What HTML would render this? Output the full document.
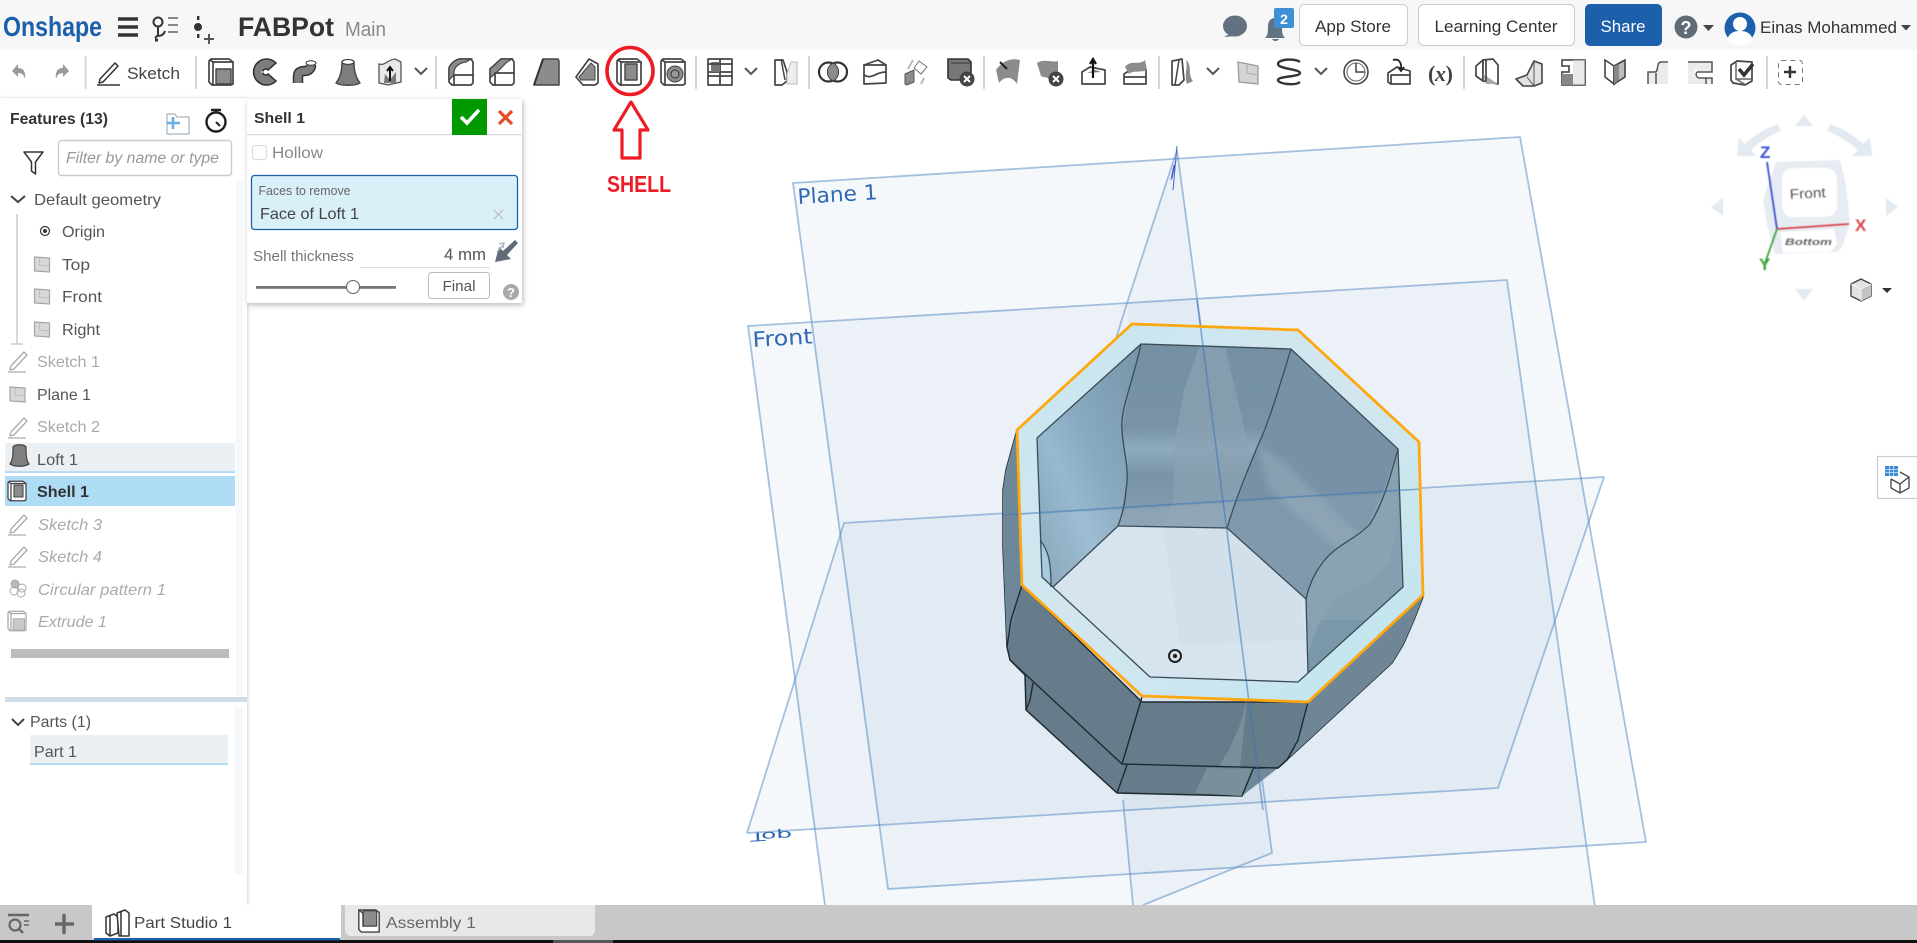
<!DOCTYPE html>
<html><head><meta charset="utf-8"><title>FABPot</title>
<style>
html,body{margin:0;padding:0;background:#fff;overflow:hidden}
svg{display:block;font-family:"Liberation Sans",sans-serif}
.i{fill:#fff;stroke:#444;stroke-width:1.7;stroke-linejoin:round;stroke-linecap:round}
.g{fill:#8c8c8c;stroke:#444;stroke-width:1.4;stroke-linejoin:round}
.n{fill:none;stroke:#444;stroke-width:1.7;stroke-linejoin:round;stroke-linecap:round}
.sep{fill:#d6d6d6}
.t{fill:#555;font-size:16px}
.d{fill:#aaa;font-size:16px}
.di{fill:#aaa;font-size:16px;font-style:italic}
</style></head>
<body>
<svg xmlns="http://www.w3.org/2000/svg" width="1917" height="943" viewBox="0 0 1917 943">
<defs>
<linearGradient id="wa" x1="0" y1="1" x2="1" y2="0"><stop offset="0" stop-color="#7f9db1"/><stop offset=".35" stop-color="#97b9d0"/><stop offset=".55" stop-color="#88a9bf"/><stop offset="1" stop-color="#7794a8"/></linearGradient>
<linearGradient id="wb" x1="0" y1="0" x2="0" y2="1"><stop offset="0" stop-color="#7590a3"/><stop offset=".45" stop-color="#7893a7"/><stop offset=".57" stop-color="#8fabc0"/><stop offset=".72" stop-color="#7893a6"/><stop offset="1" stop-color="#88a0b1"/></linearGradient>
<linearGradient id="rg" x1="0" y1="0" x2="1" y2="1"><stop offset="0" stop-color="#c8e6ef"/><stop offset=".5" stop-color="#d3e6ef"/><stop offset="1" stop-color="#bfe5ef"/></linearGradient>
<filter id="sh" x="-10%" y="-10%" width="125%" height="125%"><feDropShadow dx="1" dy="2" stdDeviation="3" flood-color="#000" flood-opacity=".28"/></filter>
<filter id="sh2" x="-5%" y="-2%" width="115%" height="104%"><feDropShadow dx="1" dy="0" stdDeviation="1.800" flood-color="#000" flood-opacity=".18"/></filter>
<filter id="bl" color-interpolation-filters="sRGB"><feGaussianBlur stdDeviation=".45"/></filter>
<filter id="soft" x="-20%" y="-20%" width="140%" height="140%" color-interpolation-filters="sRGB"><feGaussianBlur stdDeviation="3.500"/></filter>
<clipPath id="cw"><path d="M1141 344 1291 349 1398 449 1403 587 1308 673 1306 599 1227 528 1118 526 1053 587 1042 577 1037 438Z"/></clipPath>
<g id="box"><path class="i" d="M-10-13H8l4 3V12l-2 1H-9l-3-3V-11z"/><path class="n" d="M-8-10H12M-8-10V13M-11-12l3 2"/></g>
<g id="pl"><path d="M-8-7 7-6V8L-8 7z" fill="#d8d8d8" stroke="#a5a5a5" stroke-width="1.200"/><path d="M-3-7V1L7 2" fill="none" stroke="#b5b5b5" stroke-width=".8"/></g>
<g id="pen"><path d="M-7 6 6-8 9-5-4 9l-4 1zM-10 12H8" fill="none" stroke="#aaa" stroke-width="1.300" stroke-linejoin="round"/></g>
</defs>

<rect width="1917" height="943" fill="#fff"/>

<!-- VIEWPORT PLANES -->
<g stroke="#5f8fc4" stroke-opacity=".55" stroke-width="1.800" fill="#3c6eaa" fill-opacity=".05" stroke-linejoin="round">
<path d="M793 183 1520 137 1646 842 888 889Z"/>
<path d="M748 326 1507 280 1600 943H830Z"/>
<path d="M844 523 1604 477 1498 788 747 833Z"/>
<path d="M1177 150 1272 853 1143 905 1133 905 1123 800 1128 300Z" stroke="none"/>
<path d="M1100 390 1128 300 1177 150 1272 853 1143 905" fill="none"/>
<path d="M1123 800 1133 905" fill="none"/>
</g>
<g fill="#2f68b3" font-family="'DejaVu Sans','Liberation Sans',sans-serif" font-size="21">
<text transform="translate(798,204) rotate(-3.500)" textLength="80" lengthAdjust="spacingAndGlyphs">Plane 1</text>
<text transform="translate(753,347) rotate(-3.500)" textLength="60" lengthAdjust="spacingAndGlyphs">Front</text>
<text transform="translate(750,833) rotate(-3) scale(1,-.6)" font-size="20" textLength="42" lengthAdjust="spacingAndGlyphs">Top</text>
</g>
<g stroke="#3f63c4" stroke-width="1" fill="none"><path d="M1177 146 1173 190M1176 160 1172 178M1174 165 1171 180"/></g>

<!-- PART outer -->
<path d="M1017 430 1006 470 1003 490 1003 547 1007 647 1010 660 1025 675 1026 710 1117 793 1242 796 1253 769 1278 768 1392 663 1403 645 1414 620 1423 597 1308 702H1142L1022 585Z" fill="#667c8a" stroke="#1d2a33" stroke-width="1.500" stroke-linejoin="round"/>
<path d="M1017 430 1006 470 1003 490 1003 547 1007 647 1022 585Z" fill="#6f8899"/>
<path d="M1308 702 1423 597 1414 620 1403 645 1392 663 1278 768 1287 760 1300 730Z" fill="#6e8696"/>
<path d="M1247 699 1240 725 1229 750 1218 767 1250 769 1240 768Z" fill="#788f9c"/>
<path d="M1207 768 1195 793 1242 796 1253 769Z" fill="#788f9c"/>
<path d="M1253 769 1242 796 1278 768Z" fill="#708898"/>
<g fill="none" stroke="#1d2a33" stroke-width="1.400" stroke-linejoin="round">
<path d="M1022 585 1011 620 1007 647"/>
<path d="M1142 697 1122 764"/>
<path d="M1010 660 1122 764 1278 768"/>
<path d="M1308 702 1298 740 1287 760 1278 768"/>
<path d="M1127 765 1117 793"/>
<path d="M1253 769 1242 796"/>
<path d="M1033 683 1030 700 1026 710"/>
</g>

<!-- ring top -->
<path d="M1132 324 1298 330 1419 442 1423 595 1308 702 1142 696 1022 585 1017 430Z" fill="url(#rg)"/>
<!-- floor -->
<path d="M1118 526 1227 528 1306 599 1308 673 1298 682 1150 677 1053 587Z" fill="#d6e4ef"/>
<path d="M1163 527 1227 528 1300 594 1306 640 1180 645Z" fill="#cfdfe9" opacity=".8"/>
<!-- walls -->
<path d="M1037 438 1141 344 1130 385 1122 430 1127 477 1118 526 1053 587 1042 577Z" fill="url(#wa)"/>
<path d="M1141 344 1291 349 1275 400 1260 440 1237 500 1227 528 1118 526 1127 477 1122 430 1130 385Z" fill="url(#wb)"/>
<path d="M1291 349 1398 449 1383 493 1367 527 1347 540 1320 563 1306 599 1227 528 1237 500 1260 440 1275 400Z" fill="#7792a6"/>
<path d="M1398 449 1403 587 1308 673 1306 599 1320 563 1347 540 1367 527 1383 493Z" fill="#7b98ab"/>
<g clip-path="url(#cw)">
<path d="M1199 347 1184 390 1175 440 1173 500 1163 527 1227 528 1237 500 1252 460 1225 347Z" fill="#8aa3b3" opacity=".7"/>
<path d="M1000 517 1425 491 1425 620 1000 620Z" fill="#fff" opacity=".07"/>
<path d="M1256 444 1282 460 1360 535 1340 552 1270 490Z" fill="#98b0bf" opacity=".5" filter="url(#soft)"/>
<path d="M1398 520 1390 560 1370 582 1335 600 1318 625 1306 660 1306 599 1320 563 1347 540 1367 527 1383 493 1398 449Z" fill="#8aa3b3" opacity=".9"/>
</g>
<path d="M1040 540 1048 552 1051 570 1051 587 1042 577Z" fill="#a6cbe0"/>
<g fill="none" stroke="#3c4c58" stroke-width="1.300" stroke-linejoin="round">
<path d="M1141 344 1291 349 1398 449 1403 587 1308 673 1298 682 1150 677 1042 577 1037 438Z"/>
<path d="M1118 526 1227 528 1306 599 1308 673"/>
<path d="M1118 526 1053 587"/>
<path d="M1141 344C1132 385 1120 410 1122 430 1123 450 1130 470 1126 490 1125 505 1122 515 1118 526"/>
<path d="M1291 349C1280 385 1268 425 1258 445 1248 470 1237 495 1227 528"/>
<path d="M1398 449C1392 470 1385 500 1370 524 1360 535 1345 542 1335 550 1320 562 1310 580 1306 599"/>
<path d="M1040 540C1048 550 1051 560 1051 587"/>
</g>
<!-- plane lines over part -->
<g stroke="#3c74b8" stroke-opacity=".55" stroke-width="1.600" fill="none">
<path d="M1003 515 1421 489"/>
<path d="M1197 300 1263 810"/>
</g>
<!-- orange edge -->
<path d="M1132 324 1298 330 1419 442 1423 595 1308 702 1142 696 1022 585 1017 430Z" fill="none" stroke="#ffa70f" stroke-width="2.800" stroke-linejoin="round"/>
<!-- origin -->
<circle cx="1175" cy="656" r="6" fill="#dfe3e6" stroke="#222" stroke-width="2"/><circle cx="1175" cy="656" r="2.200" fill="#222"/>

<!-- HEADER -->
<rect width="1917" height="50" fill="#f7f7f7"/>
<text x="3" y="36" font-size="28" font-weight="700" fill="#1c5fab" textLength="99" lengthAdjust="spacingAndGlyphs">Onshape</text>
<path d="M118 19h20M118 27h20M118 35h20" stroke="#333" stroke-width="3.400" fill="none"/>
<g fill="none" stroke="#333" stroke-width="2"><circle cx="158" cy="22" r="4.500"/><path d="M158 27v8l-3 3M158 36c4 0 6-2 7-5"/><path d="M168 18h10M168 25h10M168 32h10" stroke="#888"/><path d="M155 40h3" stroke-width="3"/></g>
<g fill="#333"><circle cx="198" cy="27" r="4"/><rect x="197" y="16" width="2.400" height="4"/><rect x="197" y="34" width="2.400" height="4"/></g>
<path d="M209 34v10M204 39h10" stroke="#555" stroke-width="2"/>
<text x="238" y="36" font-size="27" font-weight="700" fill="#333" textLength="96" lengthAdjust="spacingAndGlyphs">FABPot</text>
<text x="345" y="36" font-size="20" fill="#888" textLength="41" lengthAdjust="spacingAndGlyphs">Main</text>

<ellipse cx="1235" cy="26" rx="12" ry="10.500" fill="#637280"/><path d="M1224 37l9-5 3 4z" fill="#637280"/>
<path d="M1265 38c3-3 3-6 3-12 0-5 3-8 7-8s7 3 7 8c0 6 0 9 3 12z" fill="#637280"/><path d="M1272 39a4 4 0 0 0 7 0z" fill="#637280"/>
<rect x="1274" y="8" width="20" height="20" rx="2" fill="#3f8fd6"/>
<text x="1284" y="24" font-size="14" font-weight="700" fill="#fff" text-anchor="middle">2</text>

<rect x="1299.500" y="4.500" width="108" height="41" rx="5" fill="#fff" stroke="#ccc"/>
<text x="1353" y="32" font-size="17" fill="#333" text-anchor="middle" textLength="76" lengthAdjust="spacingAndGlyphs">App Store</text>
<rect x="1418.500" y="4.500" width="156" height="41" rx="5" fill="#fff" stroke="#ccc"/>
<text x="1496" y="32" font-size="17" fill="#333" text-anchor="middle" textLength="123" lengthAdjust="spacingAndGlyphs">Learning Center</text>
<rect x="1585" y="4" width="77" height="42" rx="5" fill="#1c5fab"/>
<text x="1623" y="32" font-size="17" fill="#fff" text-anchor="middle" textLength="45" lengthAdjust="spacingAndGlyphs">Share</text>
<circle cx="1686" cy="27" r="11.500" fill="#5f6b76"/><text x="1686" y="34" font-size="18" font-weight="700" fill="#fff" text-anchor="middle">?</text>
<path d="M1703 25h11l-5.500 6z" fill="#444"/>
<circle cx="1740" cy="28" r="15.500" fill="#1c5fab"/>
<circle cx="1740" cy="24" r="7" fill="#fff"/><path d="M1727 40c2-7 7-9 13-9s11 2 13 9c-4 4-8 5-13 5s-9-1-13-5z" fill="#fff"/>
<text x="1760" y="33" font-size="17" fill="#333" textLength="137" lengthAdjust="spacingAndGlyphs">Einas Mohammed</text>
<path d="M1901 25h10l-5 5.500z" fill="#444"/>

<!-- TOOLBAR -->
<g class="sep">
<rect x="84.500" y="56" width="2" height="33"/><rect x="195" y="56" width="2" height="33"/><rect x="435" y="56" width="2" height="33"/><rect x="695" y="56" width="2" height="33"/><rect x="808" y="56" width="2" height="33"/><rect x="983" y="56" width="2" height="33"/><rect x="1158" y="56" width="2" height="33"/><rect x="1463" y="56" width="2" height="33"/><rect x="1766" y="56" width="2" height="33"/>
</g>
<g transform="translate(19,72)"><path d="M-7-1-1-8v4c5 0 8 3 7 11-1-4-3-6-7-6v4z" fill="#9a9a9a"/></g>
<g transform="translate(62,72)"><path d="M7-1 1-8v4c-5 0-8 3-7 11 1-4 3-6 7-6v4z" fill="#9a9a9a"/></g>
<g transform="translate(109,73)"><path d="M-9 6 6-10l3 3L-6 9l-4 1zM-12 12H11" fill="none" stroke="#333" stroke-width="1.500" stroke-linejoin="round"/></g>
<text x="127" y="79" font-size="17" fill="#444" textLength="53" lengthAdjust="spacingAndGlyphs">Sketch</text>

<g transform="translate(221,72)"><use href="#box"/><path class="g" d="M-5-3H10V12H-5z"/></g>
<g transform="translate(267,72)"><path d="M9-9A13 13 0 1 0 9 9L1 2a3 3 0 1 1 0-4z" fill="#7d7d7d" stroke="#333" stroke-width="1.600"/><path d="M-6 0h4M1 0h6" stroke="#fff" stroke-width="1"/></g>
<g transform="translate(306,72)"><path d="M-8 11V5c0-6 4-6 7-6s6-2 6-6V-7" fill="none" stroke="#333" stroke-width="10.500"/><path d="M-8 11V5c0-6 4-6 7-6s6-2 6-6V-7" fill="none" stroke="#7d7d7d" stroke-width="7.500"/><ellipse cx="5" cy="-9" rx="5" ry="2.200" fill="#fff" stroke="#333"/></g>
<g transform="translate(348,72)"><path d="M-6-10C-6-2-8 6-12 11c4 3 20 3 24 0C8 6 6-2 6-10z" fill="#7d7d7d" stroke="#444" stroke-width="1.400"/><ellipse cx="0" cy="-10" rx="6" ry="2.500" fill="#fff" stroke="#444" stroke-width="1.300"/></g>
<g transform="translate(390,72)"><path d="M-11-8c6 2 8-4 16-5l6 3V10L-2 13l-9-2z" fill="#e9e9e9" stroke="#555" stroke-width="1.300"/><path d="M-5 2 0 8 6 0V11H-6z" fill="#777"/><path d="M0 9V-4M-3-1 0-5 3-1" stroke="#111" stroke-width="2" fill="none"/></g>
<path d="M415 68l6 6 6-6" fill="none" stroke="#555" stroke-width="2"/>

<g transform="translate(461,72)"><path class="i" d="M-12-4C-10-9-5-13 0-13H10l2 3V11l-2 2H-9l-3-3z"/><path d="M-12-4V8L-7 3C-8-4-3-9 5-10L10-13H0C-5-13-10-9-12-4z" fill="#8c8c8c" stroke="#444" stroke-width="1.200"/><path class="n" d="M-7 3V13M-7 3H12"/></g>
<g transform="translate(502,72)"><path class="i" d="M-12-3-1-13H10l2 3V11l-2 2H-9l-3-3z"/><path d="M-12-3V6L-5 0 5-10 10-13H-1z" fill="#8c8c8c" stroke="#444" stroke-width="1.200"/><path class="n" d="M-7 1V13M-7 1H12"/></g>
<g transform="translate(547,72)"><path d="M-13 13-4-13H11l1 2V13z" fill="#8c8c8c" stroke="#444" stroke-width="1.500" stroke-linejoin="round"/><path d="M-4-13-13 13" stroke="#333" stroke-width="2"/></g>
<g transform="translate(587,72)"><path class="i" d="M-11 5 2-13 11-8V11L8 13H-4z"/><path d="M-8 5 4-9 8-5V8H-6z" fill="#8c8c8c" stroke="#444"/></g>
<g transform="translate(629,72)"><use href="#box"/><path class="g" d="M-4-8H8V8H-4z"/></g>
<g transform="translate(673,72)"><use href="#box"/><circle cx="2" cy="2" r="8" fill="#8c8c8c" stroke="#444"/><circle cx="2" cy="2" r="4" fill="#999" stroke="#333"/></g>

<g transform="translate(720,72)"><path class="i" d="M-12-13H12V13H-12z"/><path d="M0-13V13M-12 0H12" stroke="#444" stroke-width="1.800"/><rect x="-9" y="-10" width="9" height="10" fill="#777"/><path class="n" d="M-12-8H12M-12 4H12"/></g>
<path d="M745 68l6 6 6-6" fill="none" stroke="#555" stroke-width="2"/>
<g transform="translate(785,72)"><path class="i" d="M-10-12H-2L2 0V9L-3 13H-10z"/><path d="M-4-13 0 8" stroke="#444" stroke-width="1.500"/><path d="M6-10H12V12H2V2z" fill="#eee" stroke="#bbb"/></g>
<g transform="translate(833,72)"><circle cx="-4.500" cy="0" r="9.500" fill="none" stroke="#333" stroke-width="2.200"/><circle cx="4.500" cy="0" r="9.500" fill="none" stroke="#333" stroke-width="2.200"/><path d="M0-8.500a9.500 9.500 0 0 1 0 17 9.500 9.500 0 0 1 0-17z" fill="#8a8a8a"/></g>
<g transform="translate(875,72)"><path class="i" d="M-11-7 3-12 11-7V11L-11 12z"/><path class="n" d="M-11-7H11M-11 3C-3 8 0 0 11 0"/></g>
<g transform="translate(917,72)"><path d="M-12 2-3-2V10L-10 13-12 12z" fill="#8c8c8c" stroke="#555"/><path d="M2-11 10-5 4 2-3-4z" fill="#fff" stroke="#777"/><path d="M-9-3-4-12M7 6 4 12" stroke="#bbb" stroke-width="2"/></g>
<g transform="translate(960,72)"><path d="M-12-13H8l3 3V8H-9l-3-2z" fill="#777" stroke="#333" stroke-width="1.600"/><path d="M-9-9H11" stroke="#333"/><circle cx="7" cy="7" r="7.500" fill="#444"/><path d="M4 4 10 10M10 4 4 10" stroke="#fff" stroke-width="2"/></g>
<g transform="translate(1008,72)"><path d="M-12-2C-5-12 4-14 12-12L9 12C5 5-3 3-9 11z" fill="#8c8c8c"/><path d="M-8-10-1-3" stroke="#222" stroke-width="2"/></g>
<g transform="translate(1050,72)"><path d="M-13-9C-6-14 2-9 8-11V0L5 12C0 4-6 6-9 4z" fill="#8c8c8c"/><circle cx="6" cy="7" r="7.500" fill="#444"/><path d="M3 4 9 10M9 4 3 10" stroke="#fff" stroke-width="2"/></g>
<g transform="translate(1093,72)"><path class="i" d="M-11 0-3-5 12-2V12H-11z"/><path d="M-6 1 8 0 2-2z" fill="#777"/><path d="M0 6V-12M-3-8 0-13 3-8" stroke="#111" stroke-width="2.200" fill="none"/></g>
<g transform="translate(1135,72)"><path class="i" d="M-11 2-3-3H11V12H-11z"/><path class="n" d="M-11 5H11"/><path d="M-10-5C-4-13 4-6 10-12L12-2C6 1-2-2-6 2z" fill="#8c8c8c"/></g>
<g transform="translate(1182,72)"><path class="i" d="M-10-11 0-13 2 8-3 13H-10z"/><path d="M-3-12-7 13" stroke="#444" stroke-width="1.500"/><path d="M4-12C11-6 5 2 11 9L5 12C2 3 6-4 4-12z" fill="#8c8c8c"/></g>
<path d="M1207 68l6 6 6-6" fill="none" stroke="#555" stroke-width="2"/>
<g transform="translate(1248,72)"><path d="M-10-10 10-6V12L-9 10z" fill="#d4d4d4" stroke="#999" stroke-width="1.300"/><path d="M-1-9V1L10 3" fill="none" stroke="#aaa"/></g>
<g transform="translate(1289,72)"><path d="M11-10C6-14-11-13-11-8S11-3 11 1-11 4-11 8 6 14 11 10" fill="none" stroke="#333" stroke-width="2.400"/></g>
<path d="M1315 68l6 6 6-6" fill="none" stroke="#555" stroke-width="2"/>
<g transform="translate(1356,72)"><circle r="12" fill="#fff" stroke="#444" stroke-width="1.600"/><circle r="9" fill="none" stroke="#666"/><path d="M0-9V0H9" fill="none" stroke="#444" stroke-width="1.500"/></g>
<g transform="translate(1399,72)"><path class="i" d="M-11 1-2-5 11-1V12H-8L-11 10z"/><path class="n" d="M-8 3V12M-8 3H11"/><path d="M-6-12C0-14 3-9 2-2M-1-5 2-1 5-5" fill="none" stroke="#222" stroke-width="1.800"/></g>
<text x="1428" y="81" font-family="'Liberation Serif',serif" font-size="22" font-weight="700" fill="#444" textLength="25">(<tspan font-style="italic">x</tspan>)</text>

<g transform="translate(1487,72)"><path class="i" d="M-11-6-4-12V9L-11 4z"/><path class="i" d="M-4-12 6-13 11-7V12L-4 9z"/><path d="M-4 2 11 12H-1z" fill="#aaa"/><path class="n" d="M-1-12V9"/></g>
<g transform="translate(1530,72)"><path d="M-14 7-3 3 4-11 12-8 12 11 4 14-7 14z" fill="#e2e2e2" stroke="#444" stroke-width="1.600" stroke-linejoin="round"/><path d="M4-11V14M-3 5 4 14" fill="none" stroke="#555"/></g>
<g transform="translate(1573,72)"><path d="M-11-12H12V13H-11V0H-4V-6H-11z" fill="#fff" stroke="#555" stroke-width="1.800"/><path d="M-11 2H0V13H-11z" fill="#888"/><path d="M0-12H12V13H0z" fill="#dadada" opacity=".6"/></g>
<g transform="translate(1615,72)"><path d="M-10-12-1-6V12L-10 5z" fill="#fff" stroke="#444" stroke-width="1.600"/><path d="M-1-6 10-12V5L-1 12z" fill="#bbb" stroke="#444" stroke-width="1.600"/><path d="M-1-6V12L4 8V-8z" fill="#888"/></g>
<g transform="translate(1657,72)"><path d="M-9 12V0H-2C0 0 2-2 2-5V-9H11V12z" fill="#ececec"/><path d="M-9 12V0H-2C2 0-1-10 4-10H11M-1 1V12" fill="none" stroke="#555" stroke-width="1.500"/></g>
<g transform="translate(1700,72)"><path d="M-12-10H12V0H-3V-2C-3-4-5-4-5-1-5 4-1 6 4 6H12V12H-12z" fill="#ececec"/><path d="M-12-10H12V0H-1C-5-1-5 6 0 6H12V12M6 6V12" fill="none" stroke="#555" stroke-width="1.500"/></g>
<g transform="translate(1742,72)"><path class="i" d="M-11-7-5-11 10-10V9L3 13-9 11-11 8z"/><path d="M-6-10V7H10M-6 7 4 13" fill="none" stroke="#666" stroke-width="1.500"/><path d="M-3-3 2 3 11-8" fill="none" stroke="#333" stroke-width="3.500"/></g>
<rect x="1778.500" y="60.500" width="24" height="24" rx="3" fill="none" stroke="#777" stroke-dasharray="5 4"/>
<path d="M1790 66v12M1784 72h12" stroke="#333" stroke-width="2.400"/>

<!-- RED ANNOTATION -->
<ellipse cx="630" cy="71" rx="23" ry="23.500" fill="none" stroke="#ed1c24" stroke-width="3.600"/>
<path d="M631 102 614 130H622V158H640V130H648Z" fill="none" stroke="#ed1c24" stroke-width="3.200" stroke-linejoin="round"/>
<text x="607" y="192" font-size="23" font-weight="700" fill="#ed1c24" textLength="64" lengthAdjust="spacingAndGlyphs">SHELL</text>

<!-- LEFT PANEL -->
<rect x="0" y="98" width="247" height="807" fill="#fff" filter="url(#sh2)"/>
<text x="10" y="124" font-size="16" font-weight="700" fill="#333" textLength="98" lengthAdjust="spacingAndGlyphs">Features (13)</text>
<g><path d="M167 114h8l2 3h12v17h-22z" fill="none" stroke="#a9b4bd" stroke-width="1.300"/><path d="M173 117v12M167 123h13" stroke="#6daee0" stroke-width="2.600"/></g>
<g fill="none" stroke="#222"><circle cx="216" cy="122" r="9.500" stroke-width="2.400"/><path d="M211 110h10M216 110v3" stroke-width="2.400"/><path d="M216 122l4 4" stroke-width="2"/></g>
<path d="M24 152h19l-7.500 10v12l-4-3v-9z" fill="none" stroke="#333" stroke-width="1.500" stroke-linejoin="round"/>
<rect x="58.500" y="140.500" width="173" height="35" rx="3" fill="#fff" stroke="#ccc" stroke-width="1.400"/>
<text x="66" y="163" font-size="15.500" font-style="italic" fill="#999" textLength="153" lengthAdjust="spacingAndGlyphs">Filter by name or type</text>
<rect x="236" y="182" width="7" height="514" fill="#f5f8fb"/>
<path d="M11 196l7 6 7-6" fill="none" stroke="#444" stroke-width="2"/>
<text x="34" y="205" class="t" textLength="127" lengthAdjust="spacingAndGlyphs">Default geometry</text>
<path d="M17 214V344M11 344H23" stroke="#ccc" stroke-width="1.500" fill="none"/>
<circle cx="45" cy="231" r="4.500" fill="none" stroke="#333" stroke-width="1.200"/><circle cx="45" cy="231" r="2" fill="#333"/>
<text x="62" y="237" class="t" textLength="43" lengthAdjust="spacingAndGlyphs">Origin</text>
<use href="#pl" x="42.500" y="264"/><text x="62" y="270" class="t" textLength="28" lengthAdjust="spacingAndGlyphs">Top</text>
<use href="#pl" x="42.500" y="296"/><text x="62" y="302" class="t" textLength="40" lengthAdjust="spacingAndGlyphs">Front</text>
<use href="#pl" x="42.500" y="329"/><text x="62" y="335" class="t" textLength="38" lengthAdjust="spacingAndGlyphs">Right</text>
<use href="#pen" x="18" y="360"/><text x="37" y="367" class="d" textLength="63" lengthAdjust="spacingAndGlyphs">Sketch 1</text>
<use href="#pl" x="18" y="394"/><text x="37" y="400" class="t" textLength="54" lengthAdjust="spacingAndGlyphs">Plane 1</text>
<use href="#pen" x="18" y="426"/><text x="37" y="432" class="d" textLength="63" lengthAdjust="spacingAndGlyphs">Sketch 2</text>
<rect x="5" y="443" width="230" height="29" fill="#ebf0f4"/><rect x="5" y="471.500" width="230" height="1.200" fill="#8cc8f0"/>
<path d="M10 464c3-4 3-10 3-17 2-3 11-3 13 0 0 7 0 13 3 17-4 3-15 3-19 0z" fill="#7f7f7f" stroke="#444" stroke-width="1.200"/>
<text x="37" y="465" class="t" textLength="41" lengthAdjust="spacingAndGlyphs">Loft 1</text>
<rect x="5" y="476" width="230" height="30" fill="#aedcf4"/>
<g transform="translate(17,491) scale(.75)"><use href="#box"/><path class="g" d="M-4-8H8V8H-4z"/></g>
<text x="37" y="497" font-size="16" font-weight="700" fill="#333" textLength="52" lengthAdjust="spacingAndGlyphs">Shell 1</text>
<use href="#pen" x="18" y="523"/><text x="38" y="530" class="di" textLength="64" lengthAdjust="spacingAndGlyphs">Sketch 3</text>
<use href="#pen" x="18" y="555"/><text x="38" y="562" class="di" textLength="64" lengthAdjust="spacingAndGlyphs">Sketch 4</text>
<g fill="none" stroke="#aaa" stroke-width="1"><circle cx="15" cy="584" r="4" fill="#bbb"/><circle cx="22" cy="588" r="4"/><circle cx="14" cy="591" r="4"/><circle cx="21" cy="593" r="4"/></g>
<text x="38" y="595" class="di" textLength="128" lengthAdjust="spacingAndGlyphs">Circular pattern 1</text>
<g transform="translate(17,621) scale(.75)" opacity=".45"><use href="#box"/><path class="g" d="M-5-3H10V12H-5z"/></g>
<text x="38" y="627" class="di" textLength="69" lengthAdjust="spacingAndGlyphs">Extrude 1</text>
<rect x="11" y="649" width="218" height="9" fill="#bdbdbd"/>
<rect x="5" y="697" width="242" height="5" fill="#d0dce6"/>
<path d="M12 719l6 6 6-6" fill="none" stroke="#444" stroke-width="2"/>
<text x="30" y="727" class="t" textLength="61" lengthAdjust="spacingAndGlyphs">Parts (1)</text>
<rect x="30" y="735" width="198" height="29" fill="#ebf0f4"/><rect x="30" y="763.500" width="198" height="1.200" fill="#8cc8f0"/>
<text x="34" y="757" class="t" textLength="43" lengthAdjust="spacingAndGlyphs">Part 1</text>
<rect x="235" y="707" width="8" height="167" fill="#f5f8fb"/>

<!-- DIALOG -->
<rect x="247" y="99" width="275" height="204" fill="#fff" filter="url(#sh)"/>
<rect x="247" y="134" width="275" height="1.200" fill="#ddd"/>
<text x="254" y="123" font-size="15" font-weight="700" fill="#333" textLength="51" lengthAdjust="spacingAndGlyphs">Shell 1</text>
<rect x="452" y="99" width="35" height="36" fill="#009900"/>
<path d="M461 117l6 6 12-13" fill="none" stroke="#fff" stroke-width="3.600"/>
<path d="M499 111l13 13M512 111l-13 13" stroke="#e14e22" stroke-width="3.200"/>
<rect x="252.500" y="145.500" width="14" height="14" rx="2.500" fill="#fff" stroke="#ddd" stroke-width="1.200"/>
<text x="272" y="158" font-size="16" fill="#888" textLength="51" lengthAdjust="spacingAndGlyphs">Hollow</text>
<rect x="251.500" y="175.500" width="266" height="54" rx="3" fill="#d9f0f9" stroke="#1c5fab" stroke-width="1.300"/>
<text x="258.500" y="195" font-size="12.500" fill="#666" textLength="92" lengthAdjust="spacingAndGlyphs">Faces to remove</text>
<text x="260" y="219" font-size="16" fill="#444" textLength="99" lengthAdjust="spacingAndGlyphs">Face of Loft 1</text>
<path d="M494 210l9 9M503 210l-9 9" stroke="#bbb" stroke-width="1.200"/>
<text x="253" y="261" font-size="14.500" fill="#777" textLength="101" lengthAdjust="spacingAndGlyphs">Shell thickness</text>
<text x="444" y="260" font-size="16.500" fill="#555" textLength="42" lengthAdjust="spacingAndGlyphs">4 mm</text>
<rect x="360" y="267" width="130" height="1" fill="#ddd"/>
<path d="M495 262 499 247 503 251 515 240 518 243 507 255 511 259Z" fill="#5f6b76"/><path d="M497 252 503 245M499 244l5-1-1 5" fill="none" stroke="#a9b2bb" stroke-width="1.300"/>
<rect x="256" y="286" width="140" height="2.800" fill="#777"/>
<circle cx="353" cy="287" r="6.500" fill="#fff" stroke="#666" stroke-width="1.100"/>
<rect x="428.500" y="272.500" width="61" height="26" rx="3" fill="#fff" stroke="#bbb"/>
<text x="459" y="291" font-size="15" fill="#555" text-anchor="middle" textLength="33" lengthAdjust="spacingAndGlyphs">Final</text>
<circle cx="511" cy="292" r="8" fill="#a9a9a9"/><text x="511" y="297" font-size="13" font-weight="700" fill="#fff" text-anchor="middle">?</text>

<!-- VIEW CUBE -->
<g filter="url(#bl)">
<g fill="#e2e9f0">
<path d="M1804 115 1795 126H1813Z"/><path d="M1795 289H1813L1804 301Z"/>
<path d="M1711 207 1723 198V216Z"/><path d="M1898 207 1886 198V216Z"/>
<path d="M1778 124C1762 130 1752 137 1745 144L1739 138 1737 156H1756L1751 150C1758 143 1768 136 1781 131Z"/>
<path d="M1830 124C1846 130 1856 137 1863 144L1870 138 1872 156H1852L1858 150C1850 143 1840 136 1827 131Z"/>
</g>
<path d="M1776 162 1840 160 1846 185 1850 222 1843 245 1838 252 1775 254 1767 225 1763 200Z" fill="#e6ecf2"/>
<rect x="1782" y="168" width="55" height="49" rx="11" fill="#fff" transform="rotate(-1 1809 192)"/>
<path d="M1780 232 1834 229 1837 245 1830 252 1783 253Z" fill="#fff"/>
<text transform="translate(1790,199) rotate(-3)" font-size="14" fill="#555" textLength="36" lengthAdjust="spacingAndGlyphs">Front</text>
<text x="1785" y="245" font-size="9" font-style="italic" font-weight="700" fill="#666" textLength="47" lengthAdjust="spacingAndGlyphs">Bottom</text>
<path d="M1777 229 1767 162" stroke="#3e52d6" stroke-width="1.800" fill="none"/>
<path d="M1777 229 1849 224" stroke="#d9434c" stroke-width="1.800" fill="none"/>
<path d="M1777 229 1765 263" stroke="#3fa63f" stroke-width="1.800" fill="none"/>
<text x="1760" y="158" font-size="17" font-weight="700" fill="#3e52d6">Z</text>
<text x="1855" y="231" font-size="17" font-weight="700" fill="#d9434c">X</text>
<text x="1759" y="270" font-size="17" font-weight="700" fill="#3fa63f">Y</text>
</g>
<g transform="translate(1861,290)"><path d="M0-11 10-6V6L0 11-10 6V-6Z" fill="#e2e2e2" stroke="#444" stroke-width="1.400" stroke-linejoin="round"/><path d="M0-1V11L10 6V-6Z" fill="#c4c4c4"/><path d="M-10-6 0-1 10-6M0-1V11" fill="none" stroke="#f2f2f2" stroke-width="1"/></g>
<path d="M1882 288h10l-5 5z" fill="#333"/>

<!-- SIDE BUTTON -->
<rect x="1877.500" y="456.500" width="42" height="42" fill="#fff" stroke="#ccc" stroke-width="1.200"/>
<path d="M1891 479v9l9 5 9-5v-11l-9-5M1891 479l9 5 9-7M1900 484v9" fill="none" stroke="#444" stroke-width="1.300"/>
<rect x="1885" y="466" width="13" height="10" fill="#3a8ad8"/><path d="M1885 469.500h13M1885 472.500h13M1889.500 466v10M1893.500 466v10" stroke="#cfe4f7" stroke-width=".8"/>

<!-- TABS -->
<rect x="0" y="905" width="1917" height="35" fill="#c8c8c8"/>
<rect x="0" y="940" width="1917" height="3" fill="#111"/>
<rect x="553" y="940" width="60" height="3" fill="#555"/>
<g stroke="#666" fill="none"><path d="M8 915h21" stroke-width="2.500"/><circle cx="15" cy="925" r="5.500" stroke-width="2.200"/><path d="M19 929l4 4" stroke-width="2.500"/><path d="M24 921h5M24 925h5" stroke-width="1.500"/></g>
<path d="M64 914v20M55 924h19" stroke="#666" stroke-width="3.500"/>
<path d="M92 905H341V936a4 4 0 0 1-4 4H96a4 4 0 0 1-4-4Z" fill="#fff"/>
<rect x="94" y="938" width="246" height="2.400" fill="#1c5fab"/>
<g fill="#fff" stroke="#333" stroke-width="1.500" stroke-linejoin="round"><path d="M106 917l8-3 4 3v16l-8 3-4-3z"/><path d="M117 913l8-3 4 3v23h-10z"/><path d="M110 916v20M121 911v25" fill="none"/></g>
<text x="134" y="928" font-size="16" fill="#444" textLength="98" lengthAdjust="spacingAndGlyphs">Part Studio 1</text>
<path d="M345 905H595V930a6 6 0 0 1-6 6H351a6 6 0 0 1-6-6Z" fill="#e8e8e8"/>
<g transform="translate(369,921) scale(.85)"><path class="i" d="M-12-13H8l4 3V13H-9l-3-3z"/><path class="g" d="M-7-12H9V6H-7z"/><path class="n" d="M-12-13-7-9V6"/></g>
<text x="386" y="928" font-size="16" fill="#666" textLength="90" lengthAdjust="spacingAndGlyphs">Assembly 1</text>
</svg>
</body></html>
